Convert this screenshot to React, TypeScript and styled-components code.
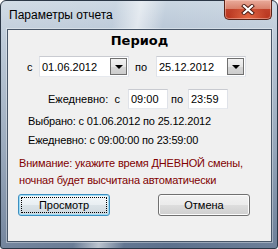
import React from "react";
import styled, { createGlobalStyle } from "styled-components";

const GlobalStyle = createGlobalStyle`
  html, body {
    margin: 0;
    padding: 0;
    background: #ffffff;
  }
  body {
    font-family: "Liberation Sans", Arial, sans-serif;
    font-size: 11px;
    color: #000000;
  }
`;

const Window = styled.div`
  box-sizing: border-box;
  width: 278px;
  height: 249px;
  display: flex;
  flex-direction: column;
  padding: 0 5px 6px 6px;
  border: 1px solid #2b3746;
  border-radius: 6px 6px 3px 3px;
  background:
    linear-gradient(100deg, rgba(255, 255, 255, 0) 36%, rgba(255, 255, 255, 0.55) 44%, rgba(255, 255, 255, 0) 52%),
    linear-gradient(90deg, rgba(255, 255, 255, 0.15) 0%, rgba(255, 255, 255, 0) 60%, rgba(255, 255, 255, 0.1) 100%),
    linear-gradient(180deg, #cad6e2 0%, #b4c3d3 40px, #8a9cb2 60%, #5c708c 100%);
`;

const TitleBar = styled.div`
  height: 28px;
  display: flex;
  justify-content: space-between;
  align-items: flex-start;
`;

const Title = styled.div`
  padding: 7px 0 0 2px;
  font-size: 12px;
  line-height: 14px;
  color: #000000;
`;

const CloseButton = styled.div`
  box-sizing: border-box;
  width: 48px;
  height: 20px;
  margin-top: -1px;
  display: flex;
  align-items: center;
  justify-content: center;
  border: 1px solid #5a2318;
  border-top: none;
  border-radius: 0 0 5px 5px;
  background:
    radial-gradient(ellipse at 50% 100%, rgba(240, 120, 80, 0.8) 0%, rgba(240, 120, 80, 0) 60%),
    linear-gradient(180deg, #e9ab9b 0%, #d9836e 45%, #c0412a 50%, #b8341d 100%);
  box-shadow: inset 0 0 0 1px rgba(255, 210, 200, 0.45);
`;

const Client = styled.div`
  flex: 1;
  display: flex;
  flex-direction: column;
  border: 1px solid #485668;
  background: #f0f0f0;
  box-shadow: 0 0 0 1px rgba(255, 255, 255, 0.35);
`;

const Heading = styled.div`
  padding-top: 2px;
  text-align: center;
  font-family: "DejaVu Sans", Verdana, sans-serif;
  font-weight: bold;
  font-size: 13px;
  line-height: 18px;
`;

const FieldRow = styled.div<{ $top: number; $left: number; $height: number }>`
  display: flex;
  align-items: center;
  height: ${(p) => p.$height}px;
  margin-top: ${(p) => p.$top}px;
  padding-left: ${(p) => p.$left}px;
`;

const Label = styled.span<{ $w: number; $ml?: number }>`
  width: ${(p) => p.$w}px;
  margin-left: ${(p) => p.$ml ?? 0}px;
  white-space: pre;
  line-height: 14px;
`;

const Field = styled.div<{ $w: number; $pad: number }>`
  box-sizing: border-box;
  width: ${(p) => p.$w}px;
  height: 100%;
  display: flex;
  align-items: center;
  justify-content: space-between;
  padding: 0 1px 0 ${(p) => p.$pad}px;
  background: #ffffff;
  border: 1px solid;
  border-color: #c9cbd1 #dfe2e8 #e6e9ee #dfe2e8;
  font-size: 11px;
`;

const DropButton = styled.div`
  box-sizing: border-box;
  width: 17px;
  height: 17px;
  display: flex;
  align-items: center;
  justify-content: center;
  border: 1px solid #707070;
  background: linear-gradient(180deg, #f2f2f2 0%, #e6e6e6 50%, #d6d6d6 51%, #cdcdcd 100%);
`;

const Arrow = styled.span`
  width: 0;
  height: 0;
  border-left: 4px solid transparent;
  border-right: 4px solid transparent;
  border-top: 4px solid #000000;
  margin-top: 1px;
`;

const TextBlock = styled.div<{ $top: number; $left: number; $lh: number; $color?: string }>`
  margin-top: ${(p) => p.$top}px;
  padding-left: ${(p) => p.$left}px;
  line-height: ${(p) => p.$lh}px;
  color: ${(p) => p.$color ?? "#000000"};
  letter-spacing: -0.17px;
  white-space: nowrap;
`;

const ButtonRow = styled.div`
  display: flex;
  gap: 48px;
  margin-top: 5px;
  padding-left: 10px;
`;

const Button = styled.div<{ $default?: boolean }>`
  position: relative;
  box-sizing: border-box;
  width: 92px;
  height: 22px;
  display: flex;
  align-items: center;
  justify-content: center;
  border: 1px solid ${(p) => (p.$default ? "#3c8fc1" : "#707070")};
  border-radius: 3px;
  background: ${(p) =>
    p.$default
      ? "linear-gradient(180deg, #f4f8fa 0%, #e8eef2 50%, #dbe3e8 51%, #cfd8de 100%)"
      : "linear-gradient(180deg, #f2f2f2 0%, #ebebeb 50%, #dddddd 51%, #cfcfcf 100%)"};
  box-shadow: inset 0 0 0 1px ${(p) => (p.$default ? "#9fdcf5" : "#fcfcfc")};
  font-size: 11px;
`;

const FocusRect = styled.span`
  position: absolute;
  inset: 2px;
  border: 1px dotted #000000;
  border-radius: 1px;
`;

const CloseGlyph = () => (
  <svg width="14" height="11" viewBox="0 0 14 11">
    <path d="M3 2 L11 9 M11 2 L3 9" stroke="#4a1a12" strokeWidth="4" strokeLinecap="square" />
    <path d="M3 2 L11 9 M11 2 L3 9" stroke="#ffffff" strokeWidth="2.2" strokeLinecap="square" />
  </svg>
);

const DateField = ({ value }: { value: string }) => (
  <Field $w={90} $pad={2}>
    <span>{value}</span>
    <DropButton>
      <Arrow />
    </DropButton>
  </Field>
);

const App = () => {
  return (
    <>
      <GlobalStyle />
      <Window>
        <TitleBar>
          <Title>Параметры отчета</Title>
          <CloseButton>
            <CloseGlyph />
          </CloseButton>
        </TitleBar>
        <Client>
          <Heading>Период</Heading>
          <FieldRow $top={6} $left={19} $height={21}>
            <Label $w={12}>с</Label>
            <DateField value="01.06.2012" />
            <Label $w={21} $ml={6}>по</Label>
            <DateField value="25.12.2012" />
          </FieldRow>
          <FieldRow $top={12} $left={40} $height={20}>
            <Label $w={80}>{"Ежедневно:\u00a0 с"}</Label>
            <Field $w={40} $pad={2}>09:00</Field>
            <Label $w={17} $ml={3}>по</Label>
            <Field $w={40} $pad={2}>23:59</Field>
          </FieldRow>
          <TextBlock $top={3} $left={20} $lh={19}>
            <div>Выбрано: с 01.06.2012 по 25.12.2012</div>
            <div>Ежедневно: с 09:00:00 по 23:59:00</div>
          </TextBlock>
          <TextBlock $top={5} $left={11} $lh={17} $color="#800000">
            <div>Внимание: укажите время ДНЕВНОЙ смены,</div>
            <div>ночная будет высчитана автоматически</div>
          </TextBlock>
          <ButtonRow>
            <Button $default>
              <FocusRect />
              Просмотр
            </Button>
            <Button>Отмена</Button>
          </ButtonRow>
        </Client>
      </Window>
    </>
  );
};

export default App;
